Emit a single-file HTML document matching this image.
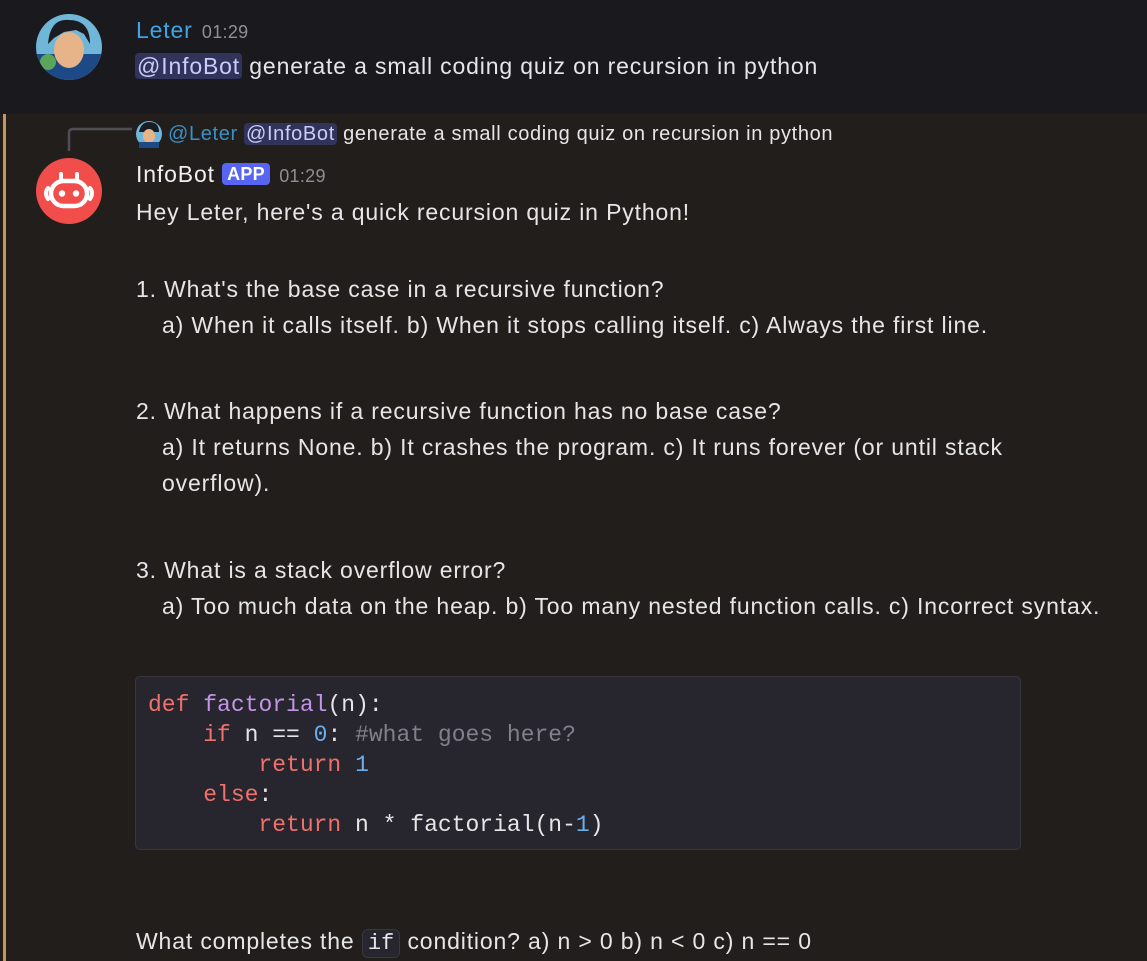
<!DOCTYPE html>
<html><head><meta charset="utf-8"><style>
*{margin:0;padding:0;box-sizing:border-box}
body{width:1147px;height:961px;overflow:hidden;background:#221e1b;font-family:"Liberation Sans",sans-serif;color:#e6e6e8;position:relative}
.top{position:absolute;left:0;top:0;width:1147px;height:114px;background:#1a1a1e}
.bar{position:absolute;left:3px;top:114px;width:3px;height:847px;background:#c9935c}
.t{position:absolute;white-space:nowrap;font-size:23px;line-height:30px;letter-spacing:0.85px}
.m{background:#31335a;color:#c9cdfb;border-radius:4px;padding:0 2px}
.code{position:absolute;left:135px;top:676px;width:886px;height:174px;background:#27252d;border:1px solid #38363d;border-radius:5px;font-family:"Liberation Mono",monospace;font-size:23px;line-height:30px;padding:13px 0 0 12px;white-space:pre;color:#e6e6e8}
.k{color:#f0716b}.f{color:#c394e8}.n{color:#6aaff0}.c{color:#7f818a}
.ic{font-family:"Liberation Mono",monospace;font-size:22px;letter-spacing:0;background:#27252d;border:1px solid #3a383f;border-radius:6px;padding:1px 5px}
</style></head><body>
<div class="top"></div>
<div class="bar"></div>
<svg style="position:absolute;left:36px;top:14px" width="66" height="66"><defs><clipPath id="a"><circle cx="33" cy="33" r="33"/></clipPath></defs><g clip-path="url(#a)"><rect width="66" height="66" fill="#6fb6d8"/><rect y="40" width="66" height="26" fill="#1d4a86"/><ellipse cx="33" cy="36" rx="15" ry="18" fill="#e7b48a"/><path d="M12 30 Q14 4 33 6 Q54 6 54 30 L48 20 L40 16 L28 18 L18 24Z" fill="#1b1b22"/><circle cx="12" cy="48" r="8" fill="#5aa55a"/></g></svg>
<div class="t" style="left:136px;top:15px;color:#3ea4e6">Leter <span style="color:#8e8f96;font-size:18px;margin-left:2px;letter-spacing:0.3px">01:29</span></div>
<div class="t" style="left:135px;top:51px"><span class="m">@InfoBot</span> generate a small coding quiz on recursion in python</div>
<svg style="position:absolute;left:66px;top:123px" width="70" height="30"><path d="M3 28 V10 Q3 6 7 6 H66" stroke="#4e4e55" stroke-width="2.5" fill="none"/></svg>
<svg style="position:absolute;left:135px;top:120px" width="28" height="28"><circle cx="14" cy="14" r="13" fill="#6fb6d8"/><path d="M4 12 Q6 2 14 2 Q24 2 24 12Z" fill="#1b1b22"/><ellipse cx="14" cy="16" rx="6" ry="7" fill="#e7b48a"/><rect x="4" y="22" width="20" height="6" fill="#1d4a86"/></svg>
<div class="t" style="left:168px;top:119px;font-size:20px;letter-spacing:0.65px"><span style="color:#3a90c8">@Leter</span> <span class="m">@InfoBot</span> generate a small coding quiz on recursion in python</div>
<svg style="position:absolute;left:36px;top:158px" width="66" height="66"><circle cx="33" cy="33" r="33" fill="#f14d4b"/><rect x="15" y="23" width="36" height="25" rx="12.5" fill="none" stroke="#fff" stroke-width="4.5"/><circle cx="26" cy="35.5" r="3.2" fill="#fff"/><circle cx="40" cy="35.5" r="3.2" fill="#fff"/><path d="M25 22 V16 M41 22 V16" stroke="#fff" stroke-width="4" stroke-linecap="round"/><path d="M12 30 Q8 35 12 41 M54 30 Q58 35 54 41" stroke="#fff" stroke-width="4" fill="none" stroke-linecap="round"/></svg>
<div class="t" style="left:136px;top:159px;color:#f0f0f2">InfoBot <span style="background:#5865f2;color:#fff;font-size:18px;font-weight:bold;border-radius:4px;padding:1px 5px;position:relative;top:-2px;letter-spacing:0.3px">APP</span> <span style="color:#8e8f96;font-size:18px;margin-left:2px;letter-spacing:0.3px">01:29</span></div>
<div class="t" style="left:136px;top:197px">Hey Leter, here's a quick recursion quiz in Python!</div>
<div class="t" style="left:136px;top:274px">1. What's the base case in a recursive function?</div>
<div class="t" style="left:162px;top:310px">a) When it calls itself. b) When it stops calling itself. c) Always the first line.</div>
<div class="t" style="left:136px;top:396px">2. What happens if a recursive function has no base case?</div>
<div class="t" style="left:162px;top:432px">a) It returns None. b) It crashes the program. c) It runs forever (or until stack</div>
<div class="t" style="left:162px;top:468px">overflow).</div>
<div class="t" style="left:136px;top:555px">3. What is a stack overflow error?</div>
<div class="t" style="left:162px;top:591px">a) Too much data on the heap. b) Too many nested function calls. c) Incorrect syntax.</div>
<div class="code"><span class="k">def</span> <span class="f">factorial</span>(n):
    <span class="k">if</span> n == <span class="n">0</span>: <span class="c">#what goes here?</span>
        <span class="k">return</span> <span class="n">1</span>
    <span class="k">else</span>:
        <span class="k">return</span> n * factorial(n-<span class="n">1</span>)</div>
<div class="t" style="left:136px;top:926px">What completes the <span class="ic">if</span> condition? a) n &gt; 0 b) n &lt; 0 c) n == 0</div>
</body></html>
